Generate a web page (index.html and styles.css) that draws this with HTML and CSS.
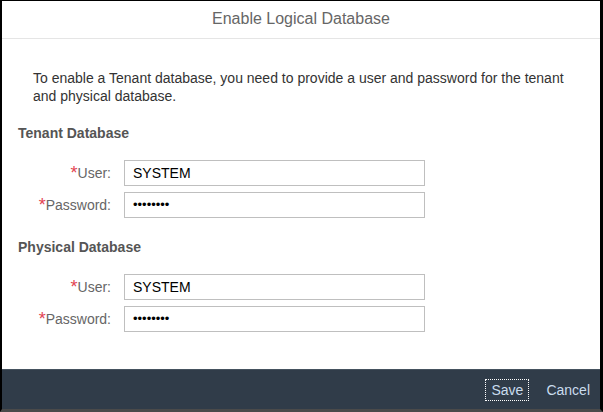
FILE: index.html
```html
<!DOCTYPE html>
<html>
<head>
<meta charset="utf-8">
<link rel="stylesheet" href="styles.css">
</head>
<body>
<div class="dialog">
  <header class="dlg-header">Enable Logical Database</header>
  <main class="dlg-content">
    <p class="intro">To enable a Tenant database, you need to provide a user and password for the tenant and physical database.</p>
    <section class="group">
      <h2 class="group-title">Tenant Database</h2>
      <div class="form">
        <label class="lbl"><span class="req">*</span>User:</label>
        <div class="field">SYSTEM</div>
        <label class="lbl"><span class="req">*</span>Password:</label>
        <div class="field pw">••••••••</div>
      </div>
    </section>
    <section class="group">
      <h2 class="group-title">Physical Database</h2>
      <div class="form">
        <label class="lbl"><span class="req">*</span>User:</label>
        <div class="field">SYSTEM</div>
        <label class="lbl"><span class="req">*</span>Password:</label>
        <div class="field pw">••••••••</div>
      </div>
    </section>
  </main>
  <footer class="dlg-footer">
    <button class="btn btn-focus">Save</button>
    <button class="btn">Cancel</button>
  </footer>
</div>
</body>
</html>
```

FILE: styles.css
```css
* { box-sizing: border-box; }
html, body { margin: 0; padding: 0; background: #fff; }
body { font-family: "Liberation Sans", Arial, sans-serif; }

.dialog {
  width: 603px;
  height: 412px;
  display: flex;
  flex-direction: column;
  border-left: 2px solid #000;
  border-right: 3px solid #000;
  border-top: 1px solid #000;
  border-bottom: 3px solid #4a4a4a;
  background: #fff;
}

.dlg-header {
  height: 38px;
  line-height: 36px;
  text-align: center;
  font-size: 16px;
  color: #666;
  border-bottom: 1px solid #e5e5e5;
  flex: none;
}

.dlg-content {
  flex: 1;
  padding: 30px 0 0 16px;
}

.intro {
  margin: 0 32px 0 15px;
  font-size: 14px;
  line-height: 18px;
  color: #333;
}

.group { margin-top: 19px; }
.group + .group { margin-top: 20px; }

.group-title {
  margin: 0;
  font-size: 14px;
  line-height: 18px;
  font-weight: bold;
  color: #555;
}

.form {
  margin-top: 18px;
  display: grid;
  grid-template-columns: 93px 301px;
  column-gap: 13px;
  row-gap: 6px;
  align-items: center;
}

.lbl {
  text-align: right;
  font-size: 14px;
  color: #666;
  white-space: nowrap;
}

.req {
  color: #e34352;
  font-size: 18px;
  vertical-align: -1px;
}

.field {
  height: 26px;
  border: 1px solid #bfbfbf;
  padding: 0 8px;
  line-height: 24px;
  font-size: 14px;
  color: #000;
}

.field.pw {
  font-size: 13px;
}

.dlg-footer {
  flex: none;
  height: 40px;
  background: #303c49;
  border-top: 1px solid #45525f;
  display: flex;
  justify-content: flex-end;
  align-items: center;
  gap: 11px;
  padding-right: 4px;
}

.btn {
  background: none;
  border: 1px solid transparent;
  color: #cadcee;
  font-family: "Liberation Sans", Arial, sans-serif;
  font-size: 14px;
  height: 22px;
  padding: 0 5px;
  line-height: 20px;
}

.btn-focus {
  border: 1px dotted #fff;
}
```
